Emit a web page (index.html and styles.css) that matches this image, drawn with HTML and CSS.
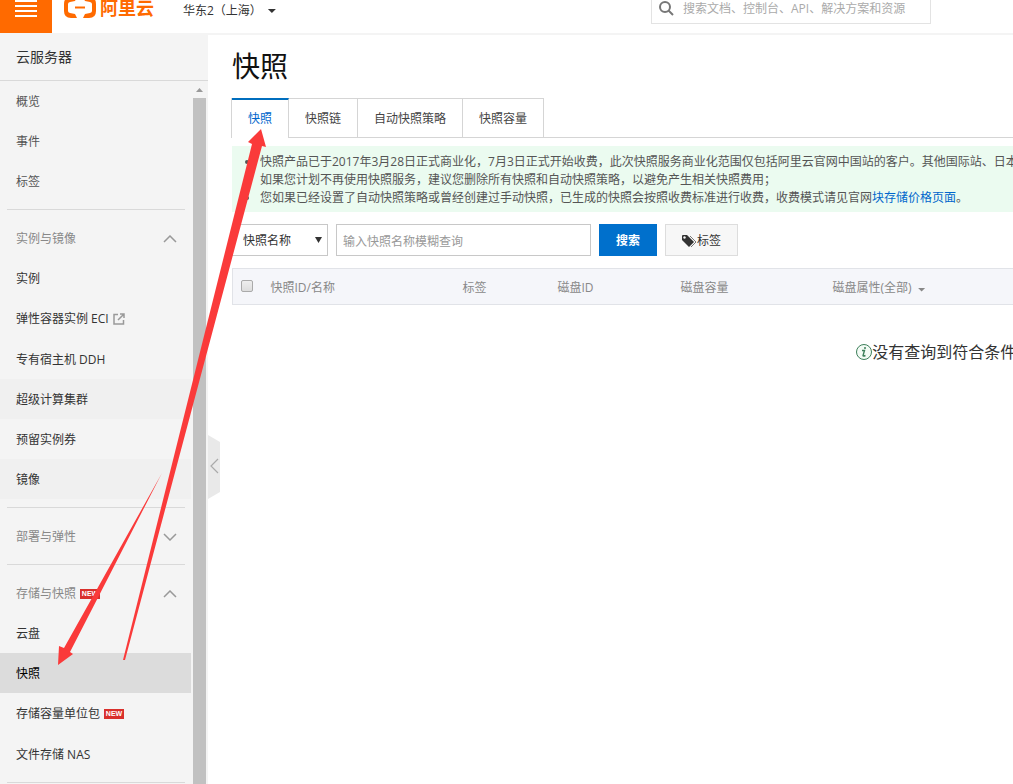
FILE: index.html
```html
<!DOCTYPE html>
<html lang="zh-CN">

<head>
    <meta charset="UTF-8">
    <meta name="viewport" content="width=device-width, initial-scale=1.0">
    <title>快照</title>
    <link rel="stylesheet" href="styles.css">
</head>

<body>
    <header class="header">
        <button class="menu-button" aria-label="菜单">
            <span class="bar"></span>
            <span class="bar"></span>
            <span class="bar"></span>
            <span class="bar"></span>
        </button>
        <a href="#" class="logo">
            <svg class="logo-mark" width="32" height="22" viewBox="0 0 32 22" fill="#ff6a00">
                <path d="M13 0H7Q0 0 0 7V14Q0 21 7 21H13L11 17L6 16Q4 15.500 4 14V7Q4 5.500 6 5L11 4Z" />
                <path d="M19 0H25Q32 0 32 7V14Q32 21 25 21H19L21 17L26 16Q28 15.500 28 14V7Q28 5.500 26 5L21 4Z" />
                <path d="M11 9.500H21V11.500H11Z" />
            </svg>
            <span class="logo-text">阿里云</span>
        </a>
        <button class="region">华东2（上海）<span class="caret"></span></button>
        <div class="top-search">
            <svg width="16" height="16" viewBox="0 0 16 16" fill="none" stroke="#777" stroke-width="2">
                <circle cx="6" cy="7" r="5" />
                <path d="M9.500 10.500L14 15" />
            </svg>
            <input type="text" aria-label="搜索" placeholder="搜索文档、控制台、API、解决方案和资源">
        </div>
    </header>

    <div class="page">
        <aside class="sidebar">
            <div class="sidebar-title">云服务器</div>
            <div class="sidebar-body">
                <nav class="menu">
                    <a href="#" class="item muted">概览</a>
                    <a href="#" class="item muted">事件</a>
                    <a href="#" class="item muted">标签</a>
                    <hr>
                    <button class="item group">实例与镜像
                        <svg class="chevron" width="14" height="8" viewBox="0 0 14 8"><path d="M1 7L7 1L13 7" /></svg>
                    </button>
                    <a href="#" class="item">实例</a>
                    <a href="#" class="item with-icon">弹性容器实例 ECI
                        <svg width="12" height="12" viewBox="0 0 12 12" fill="none" stroke="#999" stroke-width="1.500">
                            <path d="M5 1.500H1V11H10.500V7M7 1H11V5M11 1L5 7" />
                        </svg>
                    </a>
                    <a href="#" class="item">专有宿主机 DDH</a>
                    <a href="#" class="item shaded">超级计算集群</a>
                    <a href="#" class="item">预留实例券</a>
                    <a href="#" class="item shaded">镜像</a>
                    <hr>
                    <button class="item group">部署与弹性
                        <svg class="chevron" width="14" height="8" viewBox="0 0 14 8"><path d="M1 1L7 7L13 1" /></svg>
                    </button>
                    <hr>
                    <button class="item group">存储与快照
                        <span class="badge">NEW</span>
                        <svg class="chevron" width="14" height="8" viewBox="0 0 14 8"><path d="M1 7L7 1L13 7" /></svg>
                    </button>
                    <a href="#" class="item">云盘</a>
                    <a href="#" class="item active">快照</a>
                    <a href="#" class="item with-icon">存储容量单位包 <span class="badge">NEW</span></a>
                    <a href="#" class="item">文件存储 NAS</a>
                    <hr>
                </nav>
                <div class="scrollbar">
                    <span class="scroll-up"></span>
                    <span class="scroll-thumb"></span>
                </div>
            </div>
            <button class="collapse" aria-label="收起">
                <svg width="12" height="64" viewBox="0 0 12 64" fill="none">
                    <path d="M0 0L12 7V57L0 64Z" fill="#e9e9e9" />
                    <path d="M10 24L3 31L10 38" stroke="#aaa" stroke-width="1.200" />
                </svg>
            </button>
        </aside>

        <main class="content">
            <h1>快照</h1>
            <nav class="tabs">
                <a href="#" class="tab active">快照</a>
                <a href="#" class="tab">快照链</a>
                <a href="#" class="tab">自动快照策略</a>
                <a href="#" class="tab">快照容量</a>
            </nav>
            <ul class="notice">
                <li>快照产品已于2017年3月28日正式商业化，7月3日正式开始收费，此次快照服务商业化范围仅包括阿里云官网中国站的客户。其他国际站、日本<br>如果您计划不再使用快照服务，建议您删除所有快照和自动快照策略，以避免产生相关快照费用；</li>
                <li>您如果已经设置了自动快照策略或曾经创建过手动快照，已生成的快照会按照收费标准进行收费，收费模式请见官网<a href="#">块存储价格页面</a>。</li>
            </ul>
            <form class="filters">
                <div class="select-wrap">
                    <select aria-label="查询字段">
                        <option>快照名称</option>
                    </select>
                </div>
                <input type="text" class="query" aria-label="快照名称" placeholder="输入快照名称模糊查询">
                <button type="button" class="btn primary">搜索</button>
                <button type="button" class="btn">
                    <svg width="15" height="13" viewBox="0 0 15 13">
                        <path d="M0 1Q0 0 1 0H5L12 7L7 12L0 5Z" fill="#333" />
                        <circle cx="2.500" cy="2.500" r="1.200" fill="#f7f7f7" />
                        <path d="M8 1L14 7L9 12" fill="none" stroke="#777" />
                    </svg>标签
                </button>
            </form>
            <table class="snapshots">
                <thead>
                    <tr>
                        <th class="col-check"><input type="checkbox" aria-label="全选"></th>
                        <th class="col-name">快照ID/名称</th>
                        <th class="col-tag">标签</th>
                        <th class="col-disk">磁盘ID</th>
                        <th class="col-size">磁盘容量</th>
                        <th>磁盘属性(全部)<span class="caret"></span></th>
                    </tr>
                </thead>
                <tbody>
                    <tr>
                        <td colspan="6">
                            <div class="empty">
                                <svg width="16" height="16" viewBox="0 0 16 16" fill="none" stroke="#3d7f5a">
                                    <circle cx="8" cy="8" r="7.500" fill="#f3fbf5" />
                                    <path d="M6 6.500H8.500L7 11.500Q7 12.500 9.500 11.500" stroke-width="1.400" />
                                    <circle cx="9" cy="4" r="1" fill="#3d7f5a" stroke="none" />
                                </svg>没有查询到符合条件
                            </div>
                        </td>
                    </tr>
                </tbody>
            </table>
        </main>
    </div>

    <!-- Red guide arrows over the page -->
    <svg class="arrows" width="280" height="680" viewBox="0 0 280 680" fill="#fa3a3a">
        <path d="M123 660L252 144L248 142L261 129L266 147L262 146L125 660Z" />
        <path d="M162 473L64 648L59 646L58 665L73 654L70 652Z" />
    </svg>
</body>

</html>
```
FILE: styles.css
```css
* {
    box-sizing: border-box;
}

body {
    margin: 0;
    min-height: 100vh;
    display: flex;
    flex-direction: column;
    position: relative;
    overflow: hidden;
    background-color: #fff;
    color: #333;
    font-family: "Open Sans", "Noto Sans CJK SC", sans-serif;
    font-size: 12px;
    line-height: 18px;
}

a {
    color: inherit;
    text-decoration: none;
}

button,
input,
select {
    margin: 0;
    font: inherit;
    color: inherit;
}

button {
    padding: 0;
    border: 0;
    background: none;
    cursor: pointer;
}

/* Top bar, its upper part is scrolled out of view */
.header {
    display: flex;
    align-items: center;
    height: 52px;
    margin-top: -17px;
    border-bottom: 2px solid #f4f4f4;
}

.menu-button {
    display: flex;
    flex-direction: column;
    align-items: center;
    justify-content: center;
    gap: 3px;
    width: 52px;
    height: 50px;
    background-color: #ff6a00;
}

.bar {
    width: 22px;
    height: 2px;
    background-color: #fff;
}

.logo {
    display: flex;
    align-items: center;
    gap: 4px;
    margin-left: 12px;
    color: #ff6a00;
}

.logo-text {
    font-size: 18px;
    font-weight: bold;
    line-height: 20px;
}

.region {
    display: flex;
    align-items: center;
    margin-left: 29px;
    padding-top: 6px;
}

.caret {
    display: inline-block;
    width: 8px;
    height: 4px;
    margin-left: 6px;
    background-color: currentColor;
    clip-path: polygon(0 0, 100% 0, 50% 100%);
}

.top-search {
    display: flex;
    align-items: center;
    gap: 8px;
    width: 280px;
    height: 32px;
    margin-left: auto;
    margin-right: 82px;
    padding-left: 7px;
    border: 1px solid #e3e3e3;
}

.top-search input {
    flex: 1;
    min-width: 0;
    padding: 2px 0 0;
    border: 0;
    outline: 0;
}

.top-search input::placeholder {
    color: #aaa;
}

/* Sidebar */
.page {
    flex: 1;
    display: flex;
}

.sidebar {
    position: relative;
    flex: none;
    display: flex;
    flex-direction: column;
    width: 208px;
    background-color: #f4f4f4;
}

.sidebar-title {
    padding: 13px 16px 14px;
    border-bottom: 1px solid #d9d9d9;
    font-size: 14px;
}

.sidebar-body {
    flex: 1;
    display: flex;
}

.menu {
    width: 191px;
}

.menu hr {
    height: 1px;
    margin: 8px 6px 8px 7px;
    border: 0;
    background-color: #d9d9d9;
}

.item {
    display: flex;
    align-items: center;
    gap: 4px;
    width: 100%;
    height: 40px;
    padding: 2px 14px 0 16px;
}

.item.muted {
    color: #555;
}

.item.group {
    color: #888;
}

.item.shaded {
    background-color: #f0f0f0;
}

.item.active {
    background-color: #dcdcdc;
    color: #000;
}

.item.with-icon {
    height: 41px;
    padding-top: 0;
}

.chevron {
    margin-left: auto;
    fill: none;
    stroke: #999;
    stroke-width: 1.500;
}

.badge {
    width: 20px;
    background-color: #d9302c;
    color: #fff;
    font-family: "Liberation Sans", sans-serif;
    font-size: 7px;
    font-weight: bold;
    line-height: 10px;
    text-align: center;
}

.scrollbar {
    display: flex;
    flex-direction: column;
    align-items: center;
    width: 13px;
    margin-left: 2px;
}

.scroll-up {
    width: 7px;
    height: 4px;
    margin: 7px 0 6px;
    background-color: #999;
    clip-path: polygon(50% 0, 100% 100%, 0 100%);
}

.scroll-thumb {
    flex: 1;
    width: 13px;
    background-color: #c1c1c1;
}

.collapse {
    position: absolute;
    left: 100%;
    top: 400px;
}

.collapse svg {
    display: block;
}

/* Content */
.content {
    flex: 1;
    min-width: 0;
    padding-left: 24px;
    overflow: hidden;
}

h1 {
    margin: 11px 0 12px;
    font-size: 28px;
    font-weight: normal;
    line-height: 40px;
    color: #111;
}

.tabs {
    display: flex;
    border-bottom: 1px solid #d5d5d5;
}

.tab {
    height: 39px;
    padding: 11px 16px 9px;
    border-top: 1px solid #d5d5d5;
    border-right: 1px solid #d5d5d5;
    color: #444;
}

.tab.active {
    height: 40px;
    margin-bottom: -1px;
    padding-top: 10px;
    border-top: 2px solid #006ebe;
    background-color: #fff;
    box-shadow: -1px 0 #d5d5d5;
    color: #06c;
}

.notice {
    margin: 8px 0 12px;
    padding: 7px 0 5px 28px;
    background-color: #ebfbf0;
    color: #555;
    white-space: nowrap;
}

.notice a {
    color: #06c;
}

.filters {
    display: flex;
    gap: 8px;
    margin-bottom: 12px;
}

.select-wrap {
    position: relative;
}

.select-wrap::after {
    content: "";
    position: absolute;
    top: 13px;
    right: 6px;
    width: 7px;
    height: 6px;
    background-color: #333;
    clip-path: polygon(0 0, 100% 0, 50% 100%);
    pointer-events: none;
}

.filters select {
    appearance: none;
    width: 96px;
    height: 32px;
    padding: 2px 10px 0;
    border: 1px solid #c8c8c8;
    border-radius: 0;
    background-color: #fff;
}

.query {
    width: 255px;
    height: 32px;
    padding: 2px 6px 0;
    border: 1px solid #c8c8c8;
}

.query::placeholder {
    color: #999;
}

.btn {
    display: flex;
    align-items: center;
    height: 32px;
    padding: 2px 16px 0;
    border: 1px solid #ddd;
    background-color: #f7f7f7;
}

.btn.primary {
    border-color: #0070cc;
    background-color: #0070cc;
    color: #fff;
    font-weight: bold;
}

.snapshots {
    width: 100%;
    min-width: 1408px;
    border-collapse: collapse;
    table-layout: fixed;
}

.snapshots th {
    height: 36px;
    padding: 2px 8px 0;
    border-top: 1px solid #e1e3e8;
    border-bottom: 1px solid #e1e3e8;
    background-color: #f5f6fa;
    color: #888;
    font-weight: normal;
    text-align: left;
}

.snapshots .col-check {
    width: 30px;
    padding-top: 0;
    padding-bottom: 2px;
    border-left: 1px solid #e1e3e8;
}

.col-check input {
    appearance: none;
    display: block;
    width: 12px;
    height: 12px;
    border: 1px solid #aaa;
    border-radius: 2px;
    background: linear-gradient(#eee, #ddd);
}

.col-name {
    width: 192px;
}

.col-tag {
    width: 95px;
}

.col-disk {
    width: 123px;
}

.col-size {
    width: 152px;
}

.snapshots td {
    padding: 35px 0;
}

.empty {
    display: flex;
    align-items: center;
    justify-content: center;
    font-size: 16px;
    line-height: 24px;
}

.arrows {
    position: absolute;
    top: 0;
    left: 0;
    pointer-events: none;
}
```
